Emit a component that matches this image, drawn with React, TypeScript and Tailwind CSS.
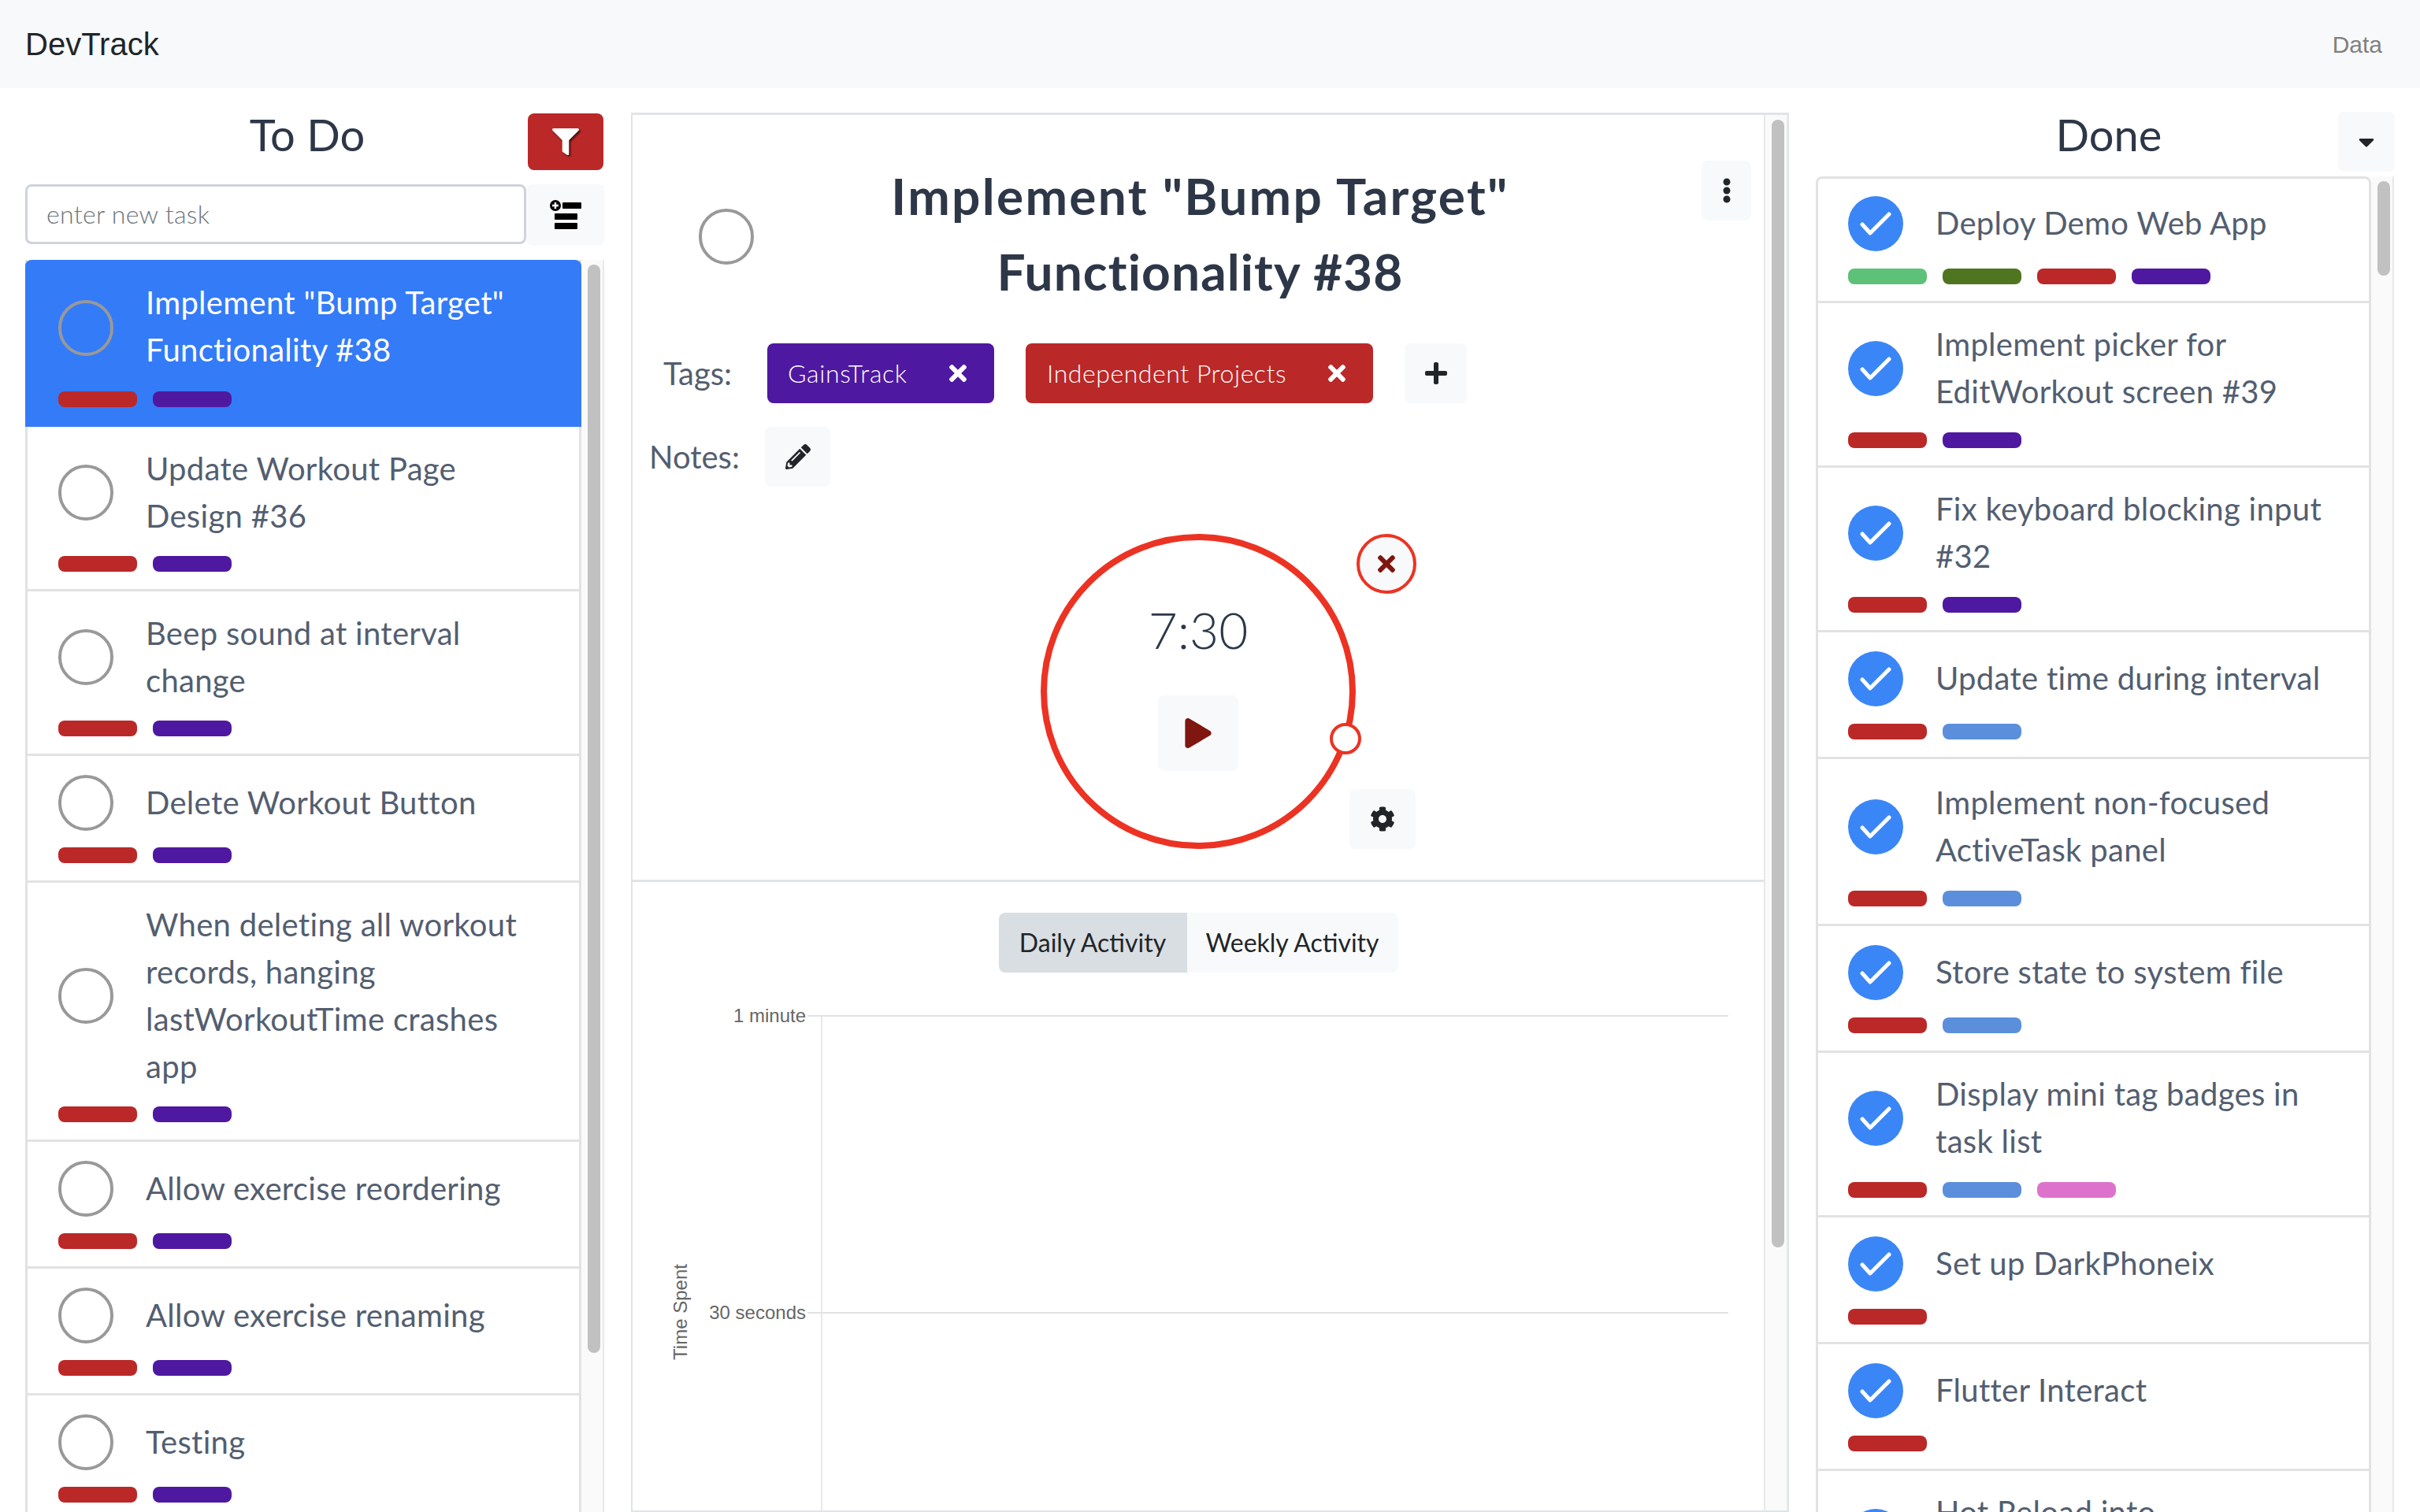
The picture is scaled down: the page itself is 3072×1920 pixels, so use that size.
import { FaCaretDown, FaCog, FaEllipsisV, FaFilter, FaPencilAlt, FaPlay, FaPlus, FaTimes } from "react-icons/fa";

const RED = "bg-[#bb2828]";
const PURPLE = "bg-[#4f18a0]";
const BLUE = "bg-[#5b8fdb]";
const GREEN = "bg-[#5ec178]";
const OLIVE = "bg-[#4f7521]";
const PINK = "bg-[#dd72cd]";

const todo = [
    { title: 'Implement "Bump Target"\nFunctionality #38', tags: [RED, PURPLE], active: true },
    { title: "Update Workout Page\nDesign #36", tags: [RED, PURPLE] },
    { title: "Beep sound at interval\nchange", tags: [RED, PURPLE] },
    { title: "Delete Workout Button", tags: [RED, PURPLE] },
    { title: "When deleting all workout\nrecords, hanging\nlastWorkoutTime crashes\napp", tags: [RED, PURPLE] },
    { title: "Allow exercise reordering", tags: [RED, PURPLE] },
    { title: "Allow exercise renaming", tags: [RED, PURPLE] },
    { title: "Testing", tags: [RED, PURPLE] },
];

const done = [
    { title: "Deploy Demo Web App", tags: [GREEN, OLIVE, RED, PURPLE], pad: "pt-[21px] pb-[21px]" },
    { title: "Implement picker for\nEditWorkout screen #39", tags: [RED, PURPLE] },
    { title: "Fix keyboard blocking input\n#32", tags: [RED, PURPLE] },
    { title: "Update time during interval", tags: [RED, BLUE] },
    { title: "Implement non-focused\nActiveTask panel", tags: [RED, BLUE], pad: "pt-[26px] pb-[22px]" },
    { title: "Store state to system file", tags: [RED, BLUE] },
    { title: "Display mini tag badges in\ntask list", tags: [RED, BLUE, PINK] },
    { title: "Set up DarkPhoneix", tags: [RED] },
    { title: "Flutter Interact", tags: [RED] },
    { title: "Hot Reload into\n\u00a0", tags: [RED] },
];

function Check() {
    return (
        <div className="w-[70px] h-[70px] rounded-full bg-[#3b86f7] flex items-center justify-center shrink-0">
            <svg width="40" height="30" viewBox="0 0 40 30" fill="none">
                <path d="M3 16 L13 27 L37 3" stroke="white" strokeWidth="5" strokeLinecap="round" strokeLinejoin="round" />
            </svg>
        </div>
    );
}

function Ring() {
    return <div className="w-[70px] h-[71px] rounded-full border-[4px] border-[#999999] shrink-0" />;
}

type Task = { title: string; tags: string[]; active?: boolean; pad?: string };

function TaskRow({ task, checked }: { task: Task; checked?: boolean }) {
    const pad = task.pad ?? "pt-[23px] pb-[22px]";
    return (
        <div className={task.active
            ? `bg-[#347bf7] border-y-[3px] border-[#347bf7] rounded-t-lg pl-[42px] pr-4 ${pad}`
            : checked
                ? `border-b-[3px] border-[#e2e2e2] pl-[38px] pr-4 ${pad}`
                : `border-b-[3px] border-[#e2e2e2] pl-[39px] pr-4 ${pad}`}>
            <div className="flex items-center gap-[41px] min-h-[72px]">
                {checked ? <Check /> : <Ring />}
                <span className={task.active
                    ? "-translate-y-[2px] text-[40px] leading-[60px] tracking-[0.3px] text-white whitespace-pre-line"
                    : checked
                        ? "-translate-y-[1px] text-[40px] leading-[60px] tracking-[0.3px] text-[#535e70] whitespace-pre-line"
                        : "text-[40px] leading-[60px] tracking-[0.3px] text-[#535e70] whitespace-pre-line"}>
                    {task.title}
                </span>
            </div>
            <div className="flex gap-5 mt-[21px]">
                {task.tags.map((tag, i) => (
                    <span key={i} className={`w-[100px] h-5 rounded-lg ${tag}`} />
                ))}
            </div>
        </div>
    );
}

function Track({ thumb }: { thumb: string }) {
    return (
        <div className="w-[29px] shrink-0 bg-[#fafafa] border-r-2 border-[#e8e8e8] pl-2 pt-[6px]">
            <div className={`w-4 rounded-lg bg-[#c1c1c1] ${thumb}`} />
        </div>
    );
}

function ListIcon() {
    return (
        <svg width="42" height="38" viewBox="0 0 42 38">
            <circle cx="8" cy="7" r="7" fill="black" />
            <path d="M8 3 V11 M4 7 H12" stroke="white" strokeWidth="2.5" />
            <rect x="17" y="3" width="24" height="8" rx="1" fill="black" />
            <rect x="7" y="17" width="29" height="8" rx="1" fill="black" />
            <rect x="7" y="29" width="29" height="8" rx="1" fill="black" />
        </svg>
    );
}

function Chart() {
    return (
        <svg width="1438" height="684" className="block">
            <line x1="222" y1="55" x2="1391" y2="55" stroke="#e2e2e2" strokeWidth="2" />
            <line x1="222" y1="432" x2="1391" y2="432" stroke="#e2e2e2" strokeWidth="2" />
            <line x1="240" y1="55" x2="240" y2="684" stroke="#e2e2e2" strokeWidth="1.5" />
            <text x="220" y="63" textAnchor="end" fontSize="24" fill="#666666" fontFamily="Liberation Sans">1 minute</text>
            <text x="220" y="440" textAnchor="end" fontSize="24" fill="#666666" fontFamily="Liberation Sans">30 seconds</text>
            <text x="69" y="431" textAnchor="middle" fontSize="24" fill="#666666" fontFamily="Liberation Sans" transform="rotate(-90 69 431)">Time Spent</text>
        </svg>
    );
}

export default function App() {
    return (
        <div className="w-[3072px] h-[1920px] overflow-hidden flex flex-col bg-white [font-family:Lato,sans-serif]">
            <nav className="h-[112px] shrink-0 bg-[#f8f9fa] flex items-center justify-between pl-8 pr-12">
                <span className="text-[40px] text-[#212529] [font-family:'Liberation_Sans',sans-serif]">DevTrack</span>
                <span className="text-[30px] text-[#808080] [font-family:'Liberation_Sans',sans-serif]">Data</span>
            </nav>

            <main className="flex flex-1 min-h-0 pl-8 pt-8">
                {/* To Do */}
                <section className="w-[736px] shrink-0 flex flex-col min-h-0">
                    <div className="h-[90px] flex items-start shrink-0">
                        <h2 className="w-[638px] pl-[78px] -mt-[4px] text-center text-[56px] leading-[62px] text-[#2d3748] font-normal">To Do</h2>
                        <button className="w-[96px] h-[72px] rounded-lg bg-[#bb2828] flex items-center justify-center">
                            <FaFilter className="text-white text-[34px] drop-shadow-[2px_2px_1px_rgba(0,0,0,0.6)]" />
                        </button>
                    </div>
                    <div className="flex h-[78px] shrink-0">
                        <div className="w-[636px] h-[76px] border-[3px] border-[#ced4da] rounded-lg flex items-center pl-[24px] text-[32px] font-light tracking-[0.3px] text-[#6c757d]">
                            enter new task
                        </div>
                        <button className="w-[99px] rounded-lg bg-[#f8f9fa] flex items-center justify-center">
                            <ListIcon />
                        </button>
                    </div>
                    <div className="flex flex-1 min-h-0 mt-[18px] overflow-hidden">
                        <div className="w-[706px] shrink-0 border-x-[3px] border-[#e2e2e2]">
                            {todo.map((t) => (
                                <div key={t.title} className={t.active ? "-mx-[3px]" : ""}>
                                    <TaskRow task={t} />
                                </div>
                            ))}
                        </div>
                        <Track thumb="h-[1382px]" />
                    </div>
                </section>

                {/* Active task */}
                <section className="w-[1470px] shrink-0 ml-[33px] -mt-px flex border-t-[3px] border-x-2 border-b-2 border-[#e0e4e8] min-h-0">
                    <div className="w-[1438px] shrink-0 border-r-2 border-[#e8e8e8] overflow-hidden">
                        <div className="grid grid-cols-[1fr_auto_1fr] pt-[58px]">
                            <div className="flex items-center pl-[84px]">
                                <Ring />
                            </div>
                            <h1 className="-mt-[3px] mb-[3px] pl-[5px] text-center text-[64px] leading-[96px] font-bold text-[#2d3748]">
                                <span className="block tracking-[2.3px]">Implement "Bump Target"</span>
                                <span className="block tracking-[1.1px]">Functionality #38</span>
                            </h1>
                            <div className="flex justify-end items-start pr-[16px]">
                                <button className="w-[63px] h-[76px] rounded-lg bg-[#f8f9fa] flex items-center justify-center">
                                    <FaEllipsisV className="text-[#212529] text-[32px]" />
                                </button>
                            </div>
                        </div>

                        <div className="flex items-center mt-[40px] pl-[39px] h-[76px] text-[40px] text-[#535e70]">
                            <span className="w-[132px]">Tags:</span>
                            <div className="flex items-center h-[76px] w-[288px] rounded-lg bg-[#4f18a0] text-white text-[32px] font-light tracking-[0.7px] pl-[26px] pr-[30px] justify-between">
                                GainsTrack
                                <FaTimes className="text-[32px]" />
                            </div>
                            <div className="flex items-center h-[76px] w-[441px] ml-10 rounded-lg bg-[#bb2828] text-white text-[32px] font-light tracking-[0.55px] pl-[27px] pr-[30px] justify-between">
                                Independent Projects
                                <FaTimes className="text-[32px]" />
                            </div>
                            <button className="w-[79px] h-[76px] ml-10 rounded-lg bg-[#f8f9fa] flex items-center justify-center">
                                <FaPlus className="text-[#212529] text-[32px]" />
                            </button>
                        </div>

                        <div className="flex items-center mt-[30px] pl-[21px] h-[76px] text-[40px] text-[#535e70]">
                            <span className="w-[147px]">Notes:</span>
                            <button className="w-[83px] h-[76px] rounded-lg bg-[#f8f9fa] flex items-center justify-center">
                                <FaPencilAlt className="text-[#212529] text-[32px]" />
                            </button>
                        </div>

                        <div className="flex justify-center mt-[60px]">
                            <div className="relative w-[400px] h-[400px] rounded-full border-[8px] border-[#ec3323] flex flex-col items-center">
                                <span className="mt-[66px] text-[64px] leading-[96px] font-light text-[#2d3748]">7:30</span>
                                <button className="mt-[35px] w-[102px] h-[96px] rounded-lg bg-[#f8f9fa] flex items-center justify-center">
                                    <FaPlay className="text-[#7f1610] text-[38px]" />
                                </button>
                                <div className="absolute left-[359px] top-[232px] w-10 h-10 rounded-full bg-white border-4 border-[#ec3323]" />
                                <button className="absolute left-[393px] -top-2 w-[76px] h-[76px] rounded-full bg-[#f8f9fa] border-4 border-[#ec3323] flex items-center justify-center">
                                    <FaTimes className="text-[#7f1610] text-[32px]" />
                                </button>
                                <button className="absolute left-[384px] top-[316px] w-[84px] h-[76px] rounded-lg bg-[#f8f9fa] flex items-center justify-center">
                                    <FaCog className="text-[#212529] text-[32px]" />
                                </button>
                            </div>
                        </div>

                        <div className="mt-[39px] border-t-[3px] border-[#e0e4e8] pt-[39px]">
                            <div className="flex justify-center text-[32px] text-[#212529]">
                                <div className="w-[239px] h-[76px] rounded-l-lg bg-[#d9dee2] flex items-center justify-center">Daily Activity</div>
                                <div className="w-[268px] h-[76px] rounded-r-lg bg-[#f8f9fa] flex items-center justify-center">Weekly Activity</div>
                            </div>
                            <Chart />
                        </div>
                    </div>
                    <Track thumb="h-[1432px]" />
                </section>

                {/* Done */}
                <section className="w-[769px] shrink-0 pl-[34px] flex flex-col min-h-0">
                    <div className="relative h-[80px] shrink-0 flex justify-center pl-[9px]">
                        <h2 className="-mt-[4px] text-[56px] leading-[62px] text-[#2d3748] font-normal">Done</h2>
                        <button className="absolute right-0 top-[-2px] w-[72px] h-[76px] rounded-lg bg-[#f8f9fa] flex items-center justify-center">
                            <FaCaretDown className="text-[#212529] text-[32px]" />
                        </button>
                    </div>
                    <div className="flex flex-1 min-h-0 overflow-hidden">
                        <div className="w-[705px] shrink-0 border-x-[3px] border-t-[3px] border-[#e2e2e2] rounded-t-lg">
                            {done.map((t) => (
                                <TaskRow key={t.title} task={t} checked />
                            ))}
                        </div>
                        <Track thumb="h-[120px]" />
                    </div>
                </section>
            </main>
        </div>
    );
}
